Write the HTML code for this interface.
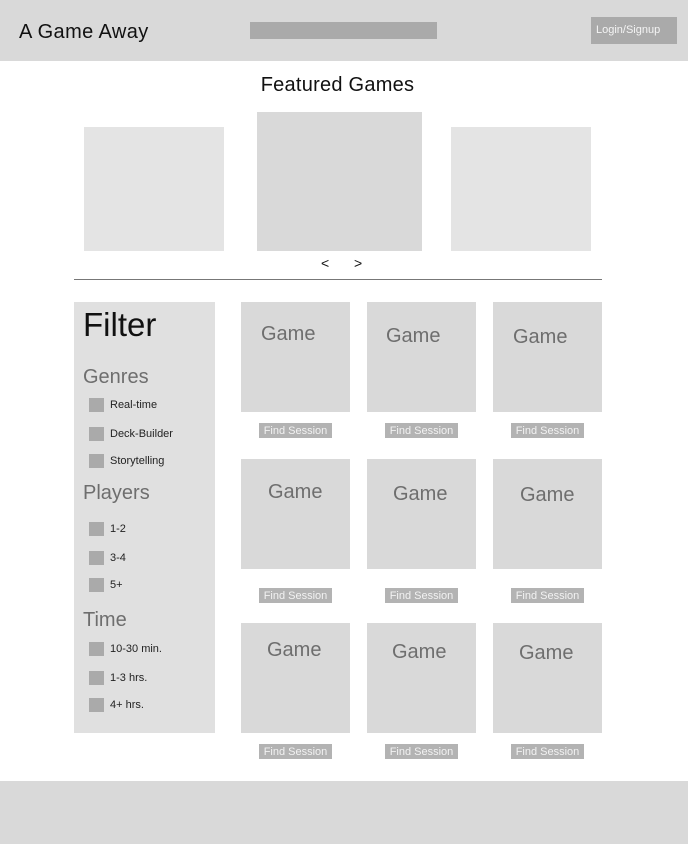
<!DOCTYPE html>
<html><head><meta charset="utf-8"><style>
*{margin:0;padding:0;box-sizing:border-box}
body{width:688px;height:844px;position:relative;background:#fff;font-family:"Liberation Sans",sans-serif;overflow:hidden}
div{position:absolute}
.t{white-space:nowrap;line-height:1}
.cb{width:15px;height:14px;background:#aaa;left:89px}
.lb{left:110px;font-size:11px;color:#222}
.card{width:109px;height:110px;background:#d9d9d9}
.g{font-size:20px;color:#6e6e6e}
.fs{width:73px;height:15px;background:#b3b3b3;color:#f2f2f2;font-size:11px;text-align:center;line-height:16px}
.h{font-size:20px;color:#6e6e6e}
</style></head><body>
<div style="left:0;top:0;width:688px;height:61px;background:#d9d9d9"></div>
<div class="t" style="left:19px;top:22px;font-size:20px;color:#111;letter-spacing:0.4px">A Game Away</div>
<div style="left:250px;top:22px;width:187px;height:17px;background:#aaa"></div>
<div style="left:591px;top:17px;width:86px;height:27px;background:#aaa;color:#f4f4f4;font-size:11px;line-height:27px;padding-left:5px">Login/Signup</div>

<div class="t" style="left:0;width:675px;text-align:center;top:75px;font-size:20px;color:#111;letter-spacing:0.25px">Featured Games</div>
<div style="left:84px;top:127px;width:140px;height:124px;background:#e4e4e4"></div>
<div style="left:257px;top:112px;width:165px;height:139px;background:#d9d9d9"></div>
<div style="left:451px;top:127px;width:140px;height:124px;background:#e4e4e4"></div>
<div class="t" style="left:321px;top:256px;font-size:14px;color:#111">&lt;</div>
<div class="t" style="left:354px;top:256px;font-size:14px;color:#111">&gt;</div>
<div style="left:74px;top:279px;width:528px;height:1px;background:#777"></div>

<div style="left:74px;top:302px;width:141px;height:431px;background:#e0e0e0"></div>
<div class="t" style="left:83px;top:308px;font-size:33px;color:#111">Filter</div>
<div class="t h" style="left:83px;top:367px">Genres</div>
<div class="cb" style="top:398px"></div><div class="t lb" style="top:400px">Real-time</div>
<div class="cb" style="top:427px"></div><div class="t lb" style="top:429px">Deck-Builder</div>
<div class="cb" style="top:454px"></div><div class="t lb" style="top:456px">Storytelling</div>
<div class="t h" style="left:83px;top:483px">Players</div>
<div class="cb" style="top:522px"></div><div class="t lb" style="top:524px">1-2</div>
<div class="cb" style="top:551px"></div><div class="t lb" style="top:553px">3-4</div>
<div class="cb" style="top:578px"></div><div class="t lb" style="top:580px">5+</div>
<div class="t h" style="left:83px;top:610px">Time</div>
<div class="cb" style="top:642px"></div><div class="t lb" style="top:644px">10-30 min.</div>
<div class="cb" style="top:671px"></div><div class="t lb" style="top:673px">1-3 hrs.</div>
<div class="cb" style="top:698px"></div><div class="t lb" style="top:700px">4+ hrs.</div>

<div class="card" style="left:241px;top:302px"></div>
<div class="card" style="left:367px;top:302px"></div>
<div class="card" style="left:493px;top:302px"></div>
<div class="card" style="left:241px;top:459px"></div>
<div class="card" style="left:367px;top:459px"></div>
<div class="card" style="left:493px;top:459px"></div>
<div class="card" style="left:241px;top:623px"></div>
<div class="card" style="left:367px;top:623px"></div>
<div class="card" style="left:493px;top:623px"></div>

<div class="t g" style="left:261px;top:324px">Game</div>
<div class="t g" style="left:386px;top:326px">Game</div>
<div class="t g" style="left:513px;top:327px">Game</div>
<div class="t g" style="left:268px;top:482px">Game</div>
<div class="t g" style="left:393px;top:484px">Game</div>
<div class="t g" style="left:520px;top:485px">Game</div>
<div class="t g" style="left:267px;top:640px">Game</div>
<div class="t g" style="left:392px;top:642px">Game</div>
<div class="t g" style="left:519px;top:643px">Game</div>

<div class="fs" style="left:259px;top:423px">Find Session</div>
<div class="fs" style="left:385px;top:423px">Find Session</div>
<div class="fs" style="left:511px;top:423px">Find Session</div>
<div class="fs" style="left:259px;top:588px">Find Session</div>
<div class="fs" style="left:385px;top:588px">Find Session</div>
<div class="fs" style="left:511px;top:588px">Find Session</div>
<div class="fs" style="left:259px;top:744px">Find Session</div>
<div class="fs" style="left:385px;top:744px">Find Session</div>
<div class="fs" style="left:511px;top:744px">Find Session</div>

<div style="left:0;top:781px;width:688px;height:63px;background:#d9d9d9"></div>
</body></html>
